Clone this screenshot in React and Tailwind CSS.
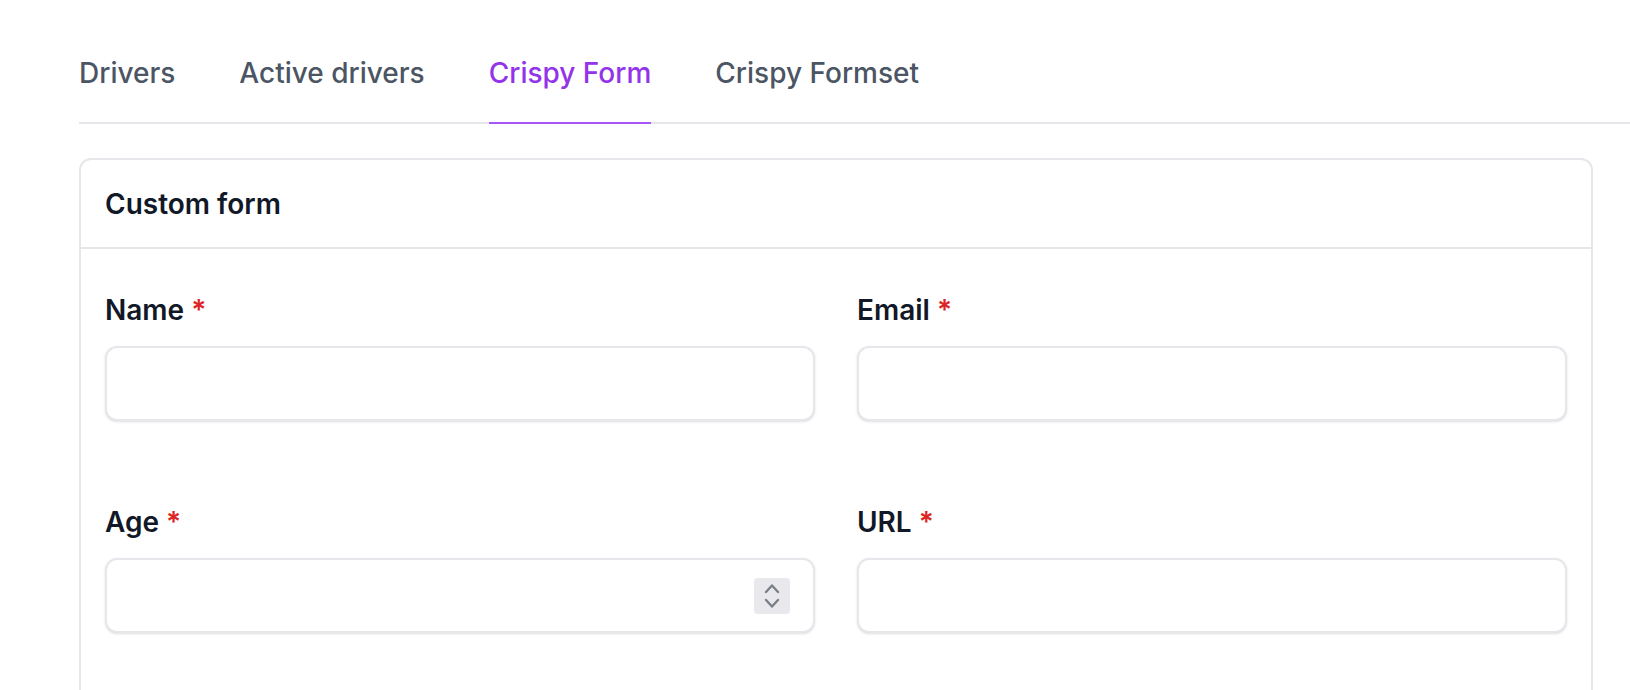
import React from 'react'

const tabs = ['Drivers', 'Active drivers', 'Crispy Form', 'Crispy Formset']

const Tab = ({label, active}) => {
  return (
    <div className={'pb-[29px] leading-[40px] text-[28px] font-medium border-b-2 -mb-[2px] ' + (active ? 'text-[#9333ea] border-[#a855f7]' : 'text-[#4b5563] border-transparent')}>
      {label}
    </div>
  )
}

const Field = ({label, spinner}) => {
  return (
    <div>
      <label className="block text-[28px] leading-[40px] font-semibold text-[#111827]">
        {label} <span className="text-[#dc2626]">*</span>
      </label>
      <div className="relative mt-[16px] h-[75px] rounded-[12px] border-2 border-[#e5e7eb] bg-white shadow-sm">
        {spinner && (
          <div className="absolute right-[23px] top-1/2 -translate-y-1/2 w-[36px] h-[36px] rounded-[4px] bg-[#e9e9ed] flex flex-col items-center justify-center gap-[4px]">
            <svg width="18" height="11" viewBox="0 0 18 11" fill="none" stroke="#7b7f88" strokeWidth="2.4" strokeLinecap="round" strokeLinejoin="round">
              <path d="M3 9 L9 2.5 L15 9" />
            </svg>
            <svg width="18" height="11" viewBox="0 0 18 11" fill="none" stroke="#7b7f88" strokeWidth="2.4" strokeLinecap="round" strokeLinejoin="round">
              <path d="M3 2 L9 8.5 L15 2" />
            </svg>
          </div>
        )}
      </div>
    </div>
  )
}

const App = () => {
  return (
    <div className="min-h-screen bg-white pl-[79px] pt-[53px] overflow-hidden" style={{fontFamily: 'Inter, "Noto Sans", sans-serif'}}>
      <div className="flex gap-[64px] border-b-2 border-[#e5e7eb]">
        {tabs.map(t => <Tab key={t} label={t} active={t === 'Crispy Form'} />)}
      </div>
      <div className="mt-[34px] mr-[37px] rounded-[12px] border-2 border-[#e5e7eb] bg-white">
        <div className="px-[24px] pt-[24px] pb-[23px] border-b-2 border-[#e5e7eb] text-[28px] leading-[40px] font-semibold text-[#111827]">
          Custom form
        </div>
        <div className="px-[24px] pt-[41px] pb-[120px] grid grid-cols-2 gap-x-[42px] gap-y-[81px]">
          <Field label="Name" />
          <Field label="Email" />
          <Field label="Age" spinner />
          <Field label="URL" />
        </div>
      </div>
    </div>
  )
}

export default App
